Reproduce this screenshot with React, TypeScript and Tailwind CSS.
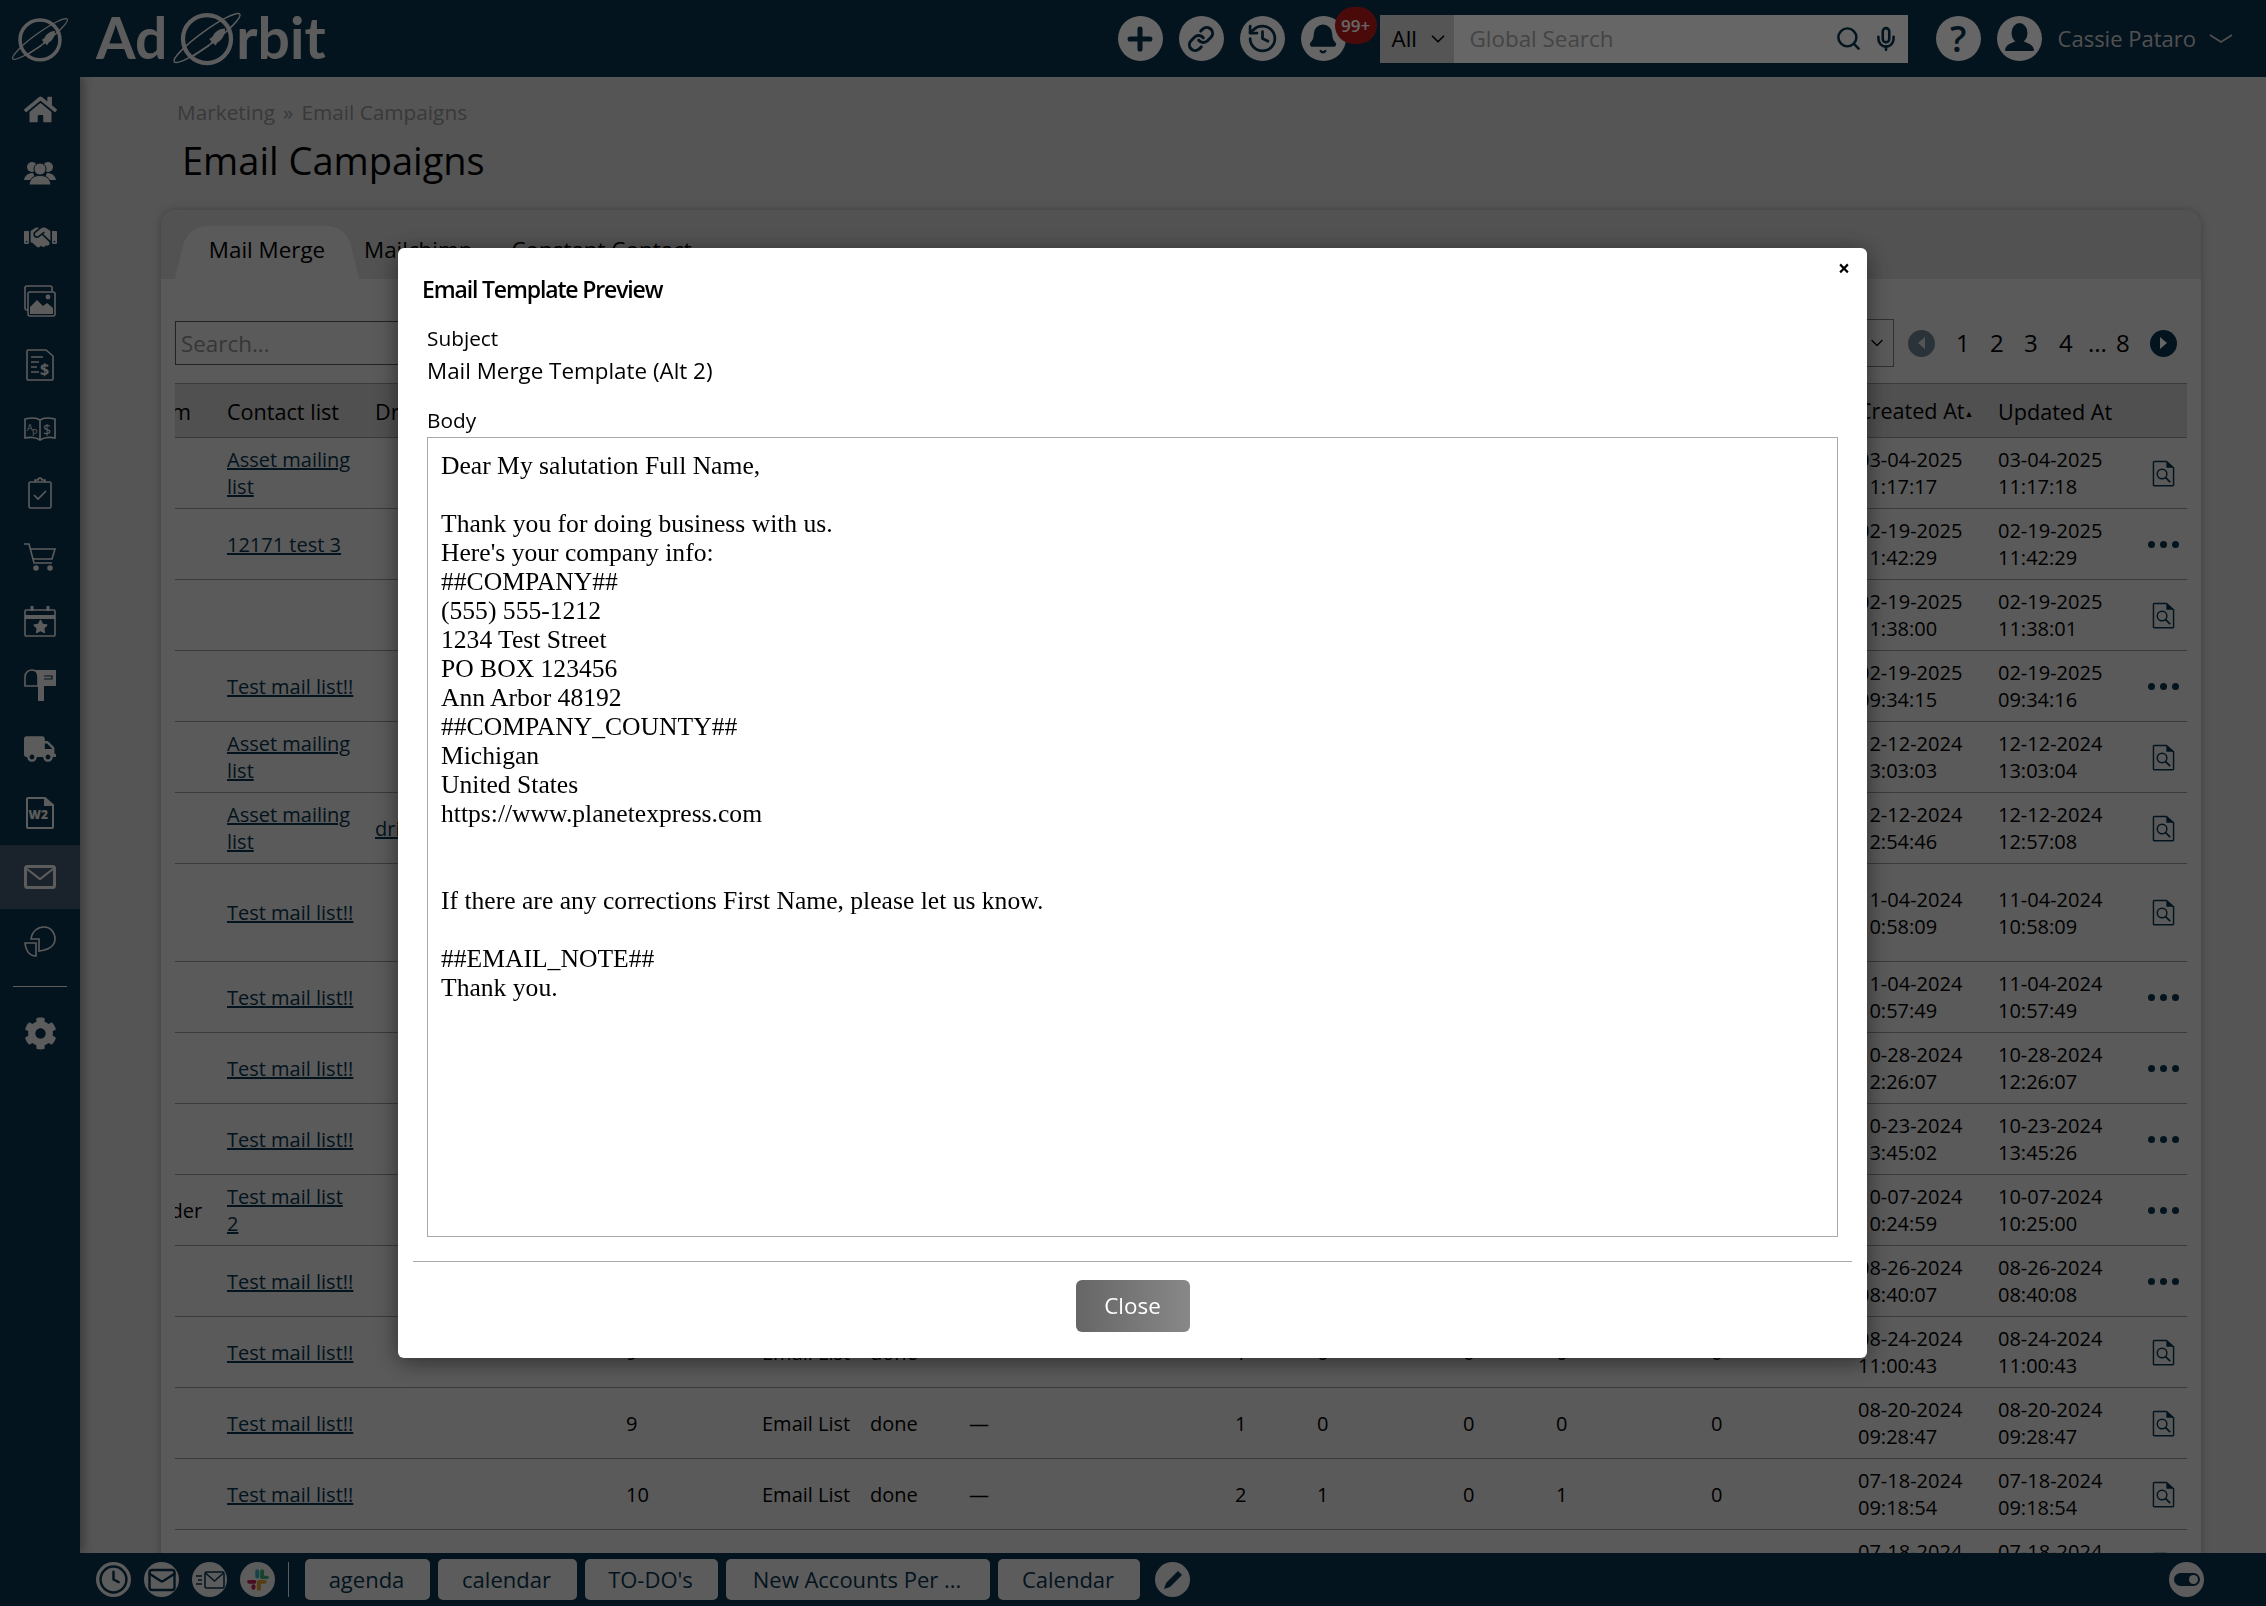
import React from "react";
import { Plus, Link, History, Bell, Search, Mic, ChevronDown, Clock, Mail } from "lucide-react";
import { FaHome, FaCog, FaTruck, FaStar } from "react-icons/fa";
import { FaHandshake } from "react-icons/fa6";

const sans = "font-['Open_Sans',sans-serif]";

type Row = {
  from?: string;
  list?: string;
  drip?: string;
  num?: string;
  type?: string;
  status?: string;
  a?: string;
  b?: string;
  c?: string;
  d?: string;
  e?: string;
  f?: string;
  created: string[];
  updated: string[];
  action: "doc" | "dots";
  tall?: boolean;
};

const rows: Row[] = [
  { list: "Asset mailing list", created: ["03-04-2025", "11:17:17"], updated: ["03-04-2025", "11:17:18"], action: "doc" },
  { list: "12171 test 3", created: ["02-19-2025", "11:42:29"], updated: ["02-19-2025", "11:42:29"], action: "dots" },
  { created: ["02-19-2025", "11:38:00"], updated: ["02-19-2025", "11:38:01"], action: "doc" },
  { list: "Test mail list!!", created: ["02-19-2025", "09:34:15"], updated: ["02-19-2025", "09:34:16"], action: "dots" },
  { list: "Asset mailing list", created: ["12-12-2024", "13:03:03"], updated: ["12-12-2024", "13:03:04"], action: "doc" },
  { list: "Asset mailing list", drip: "drip", created: ["12-12-2024", "12:54:46"], updated: ["12-12-2024", "12:57:08"], action: "doc" },
  { list: "Test mail list!!", created: ["11-04-2024", "10:58:09"], updated: ["11-04-2024", "10:58:09"], action: "doc", tall: true },
  { list: "Test mail list!!", created: ["11-04-2024", "10:57:49"], updated: ["11-04-2024", "10:57:49"], action: "dots" },
  { list: "Test mail list!!", created: ["10-28-2024", "12:26:07"], updated: ["10-28-2024", "12:26:07"], action: "dots" },
  { list: "Test mail list!!", created: ["10-23-2024", "13:45:02"], updated: ["10-23-2024", "13:45:26"], action: "dots" },
  { from: "Sender", list: "Test mail list 2", created: ["10-07-2024", "10:24:59"], updated: ["10-07-2024", "10:25:00"], action: "dots" },
  { list: "Test mail list!!", created: ["08-26-2024", "08:40:07"], updated: ["08-26-2024", "08:40:08"], action: "dots" },
  { list: "Test mail list!!", num: "9", type: "Email List", status: "done", a: "—", b: "1", c: "0", d: "0", e: "0", f: "0", created: ["08-24-2024", "11:00:43"], updated: ["08-24-2024", "11:00:43"], action: "doc" },
  { list: "Test mail list!!", num: "9", type: "Email List", status: "done", a: "—", b: "1", c: "0", d: "0", e: "0", f: "0", created: ["08-20-2024", "09:28:47"], updated: ["08-20-2024", "09:28:47"], action: "doc" },
  { list: "Test mail list!!", num: "10", type: "Email List", status: "done", a: "—", b: "2", c: "1", d: "0", e: "1", f: "0", created: ["07-18-2024", "09:18:54"], updated: ["07-18-2024", "09:18:54"], action: "doc" },
  { list: "Test mail list!!", num: "10", type: "Email List", status: "done", a: "—", b: "2", c: "1", d: "0", e: "1", f: "0", created: ["07-18-2024", "09:18:54"], updated: ["07-18-2024", "09:18:54"], action: "doc" },
];

const bodyLines = [
  "Dear My salutation Full Name,",
  "",
  "Thank you for doing business with us.",
  "Here's your company info:",
  "##COMPANY##",
  "(555) 555-1212",
  "1234 Test Street",
  "PO BOX 123456",
  "Ann Arbor 48192",
  "##COMPANY_COUNTY##",
  "Michigan",
  "United States",
  "https://www.planetexpress.com",
  "",
  "",
  "If there are any corrections First Name, please let us know.",
  "",
  "##EMAIL_NOTE##",
  "Thank you.",
];

function Logo({ className }: { className: string }) {
  return (
    <svg viewBox="0 0 70 60" className={className} fill="none" stroke="#e6e6e6">
      <circle cx="35" cy="31" r="22.5" strokeWidth="4" />
      <ellipse cx="35" cy="30" rx="38" ry="6.5" strokeWidth="1.4" transform="rotate(-36 35 30)" />
      <path d="M52 21 C47 21 42 24 40 29 L37 31 L39 33 L38 36 L41 35 L43 37 L45 34 C49 32 52 27 52 21Z" fill="#e6e6e6" stroke="none" />
      <path d="M37 37 L22 47" strokeWidth="1.4" />
    </svg>
  );
}

function DocSearch() {
  return (
    <svg viewBox="0 0 24 28" className="w-[23px] h-[27px] mx-auto" fill="none" stroke="#08324b" strokeWidth="1.5">
      <path d="M3 1.5 H15 L22.5 8 V26 a0.8 0.8 0 0 1 -0.8 0.8 H2.3 a0.8 0.8 0 0 1 -0.8 -0.8 V2.5 a1 1 0 0 1 1.5 -1Z" />
      <path d="M15 1 L23 8 H15Z" fill="#08324b" stroke="none" />
      <circle cx="10.5" cy="14.5" r="5" />
      <path d="M14.2 18.2 L19 23" strokeWidth="1.8" />
    </svg>
  );
}

function Dots() {
  return (
    <div className="flex items-center justify-center gap-[5px]">
      <span className="w-[7px] h-[7px] rounded-full bg-[#08324b]" />
      <span className="w-[7px] h-[7px] rounded-full bg-[#08324b]" />
      <span className="w-[7px] h-[7px] rounded-full bg-[#08324b]" />
    </div>
  );
}

function SideIcon({ children, active }: { children: React.ReactNode; active?: boolean }) {
  return <div className={`h-16 flex items-center justify-center text-[#e6e6e6] ${active ? "bg-[#41556e]" : ""}`}>{children}</div>;
}

function Sidebar() {
  const line = { fill: "none", stroke: "#e6e6e6", strokeWidth: 1.6 };
  return (
    <aside className="w-20 shrink-0 bg-[#08324b] z-10 shadow-[3px_0_10px_rgba(0,0,0,0.35)]">
      <SideIcon><FaHome size={33} /></SideIcon>
      <SideIcon>
        <svg viewBox="0 0 32 26" className="w-8 h-[26px]" fill="#e6e6e6">
          <circle cx="8" cy="7" r="5" /><circle cx="24" cy="7" r="5" />
          <path d="M0 20 C1 14 6 13 9 13 L12 20Z M32 20 C31 14 26 13 23 13 L20 20Z" />
          <circle cx="16" cy="9" r="6" stroke="#08324b" strokeWidth="1" />
          <path d="M5 25 C6 17 11 15.5 16 15.5 C21 15.5 26 17 27 25Z" stroke="#08324b" strokeWidth="1" />
        </svg>
      </SideIcon>
      <SideIcon><FaHandshake size={33} /></SideIcon>
      <SideIcon>
        <svg viewBox="0 0 32 32" className="w-8 h-8" {...line}>
          <rect x="1" y="1" width="27" height="24" rx="2" />
          <rect x="4" y="7" width="27" height="24" rx="2" fill="#08324b" />
          <path d="M6 29 V22 L13 15 L19 21 L23 18 L29 23 V29Z" fill="#e6e6e6" stroke="none" />
          <circle cx="24" cy="12" r="2.4" fill="#e6e6e6" stroke="none" />
        </svg>
      </SideIcon>
      <SideIcon>
        <svg viewBox="0 0 28 32" className="w-7 h-8" {...line}>
          <path d="M2 1 H20 L27 7 V30 a1 1 0 0 1 -1 1 H2 a1 1 0 0 1 -1 -1 V2 a1 1 0 0 1 1 -1Z" />
          <path d="M5 8 H17 M5 13 H13 M5 18 H11 M5 23 H13" />
          <text x="14" y="26" fontSize="16" fontWeight="700" fill="#e6e6e6" stroke="none" fontFamily="Open Sans">$</text>
        </svg>
      </SideIcon>
      <SideIcon>
        <svg viewBox="0 0 32 24" className="w-8 h-6" {...line}>
          <path d="M16 3 C12 0 5 1 1 2 V21 C5 20 12 20 16 23 C20 20 27 20 31 21 V2 C27 1 20 0 16 3Z M16 3 V23" />
          <text x="3" y="14" fontSize="9" fill="#e6e6e6" stroke="none" fontFamily="Open Sans">A</text>
          <text x="8" y="19" fontSize="9" fill="#e6e6e6" stroke="none" fontFamily="Open Sans">P</text>
          <text x="19" y="18" fontSize="14" fill="#e6e6e6" stroke="none" fontFamily="Open Sans">$</text>
        </svg>
      </SideIcon>
      <SideIcon>
        <svg viewBox="0 0 24 32" className="w-6 h-8" {...line}>
          <rect x="1" y="5" width="22" height="26" rx="1.5" />
          <path d="M7 5 V3 H10 C10 0.5 14 0.5 14 3 H17 V5" />
          <path d="M6 18 L10 22 L18 14" />
        </svg>
      </SideIcon>
      <SideIcon>
        <svg viewBox="0 0 32 28" className="w-8 h-7" {...line}>
          <path d="M0 1 H5 L10 20 H28" />
          <path d="M6 6 H31 L28 16 H9" />
          <circle cx="12" cy="25" r="2" fill="#e6e6e6" /><circle cx="26" cy="25" r="2" fill="#e6e6e6" />
        </svg>
      </SideIcon>
      <SideIcon>
        <div className="relative w-8 h-[31px] flex items-end">
          <svg viewBox="0 0 32 31" className="w-8 h-[31px]" {...line}>
            <rect x="1" y="4" width="30" height="26" rx="1" />
            <path d="M1 11 H31" strokeWidth="4" />
            <path d="M8 0 V5 M24 0 V5" strokeWidth="3" />
          </svg>
          <FaStar size={15} className="absolute left-[8.5px] bottom-[3px]" />
        </div>
      </SideIcon>
      <SideIcon>
        <svg viewBox="0 0 32 32" className="w-8 h-8" {...line}>
          <path d="M1 17 V8 C1 3 5 1 8 1 C12 1 14 4 14 8 V17Z" />
          <path d="M9 1 H32 V17 H20 V32 H14 V8 C14 5 12 2 9 1Z" fill="#e6e6e6" stroke="none" />
          <path d="M20 7 H28 V10 H20" stroke="#08324b" strokeWidth="1.2" />
        </svg>
      </SideIcon>
      <SideIcon><FaTruck size={32} /></SideIcon>
      <SideIcon>
        <svg viewBox="0 0 28 32" className="w-7 h-8" {...line} strokeWidth="2">
          <path d="M2 1 H19 L27 8 V30 a1 1 0 0 1 -1 1 H2 a1 1 0 0 1 -1 -1 V2 a1 1 0 0 1 1 -1Z" />
          <path d="M19 1 V8 H27" fill="#e6e6e6" />
          <text x="2.5" y="22" fontSize="12" fontWeight="800" fill="#e6e6e6" stroke="none" fontFamily="Open Sans">W2</text>
        </svg>
      </SideIcon>
      <SideIcon active>
        <svg viewBox="0 0 32 24" className="w-8 h-6" fill="none" stroke="#e6e6e6" strokeWidth="3">
          <rect x="1.5" y="1.5" width="29" height="21" rx="2" />
          <path d="M3 4 L16 14 L29 4" strokeWidth="2.2" />
        </svg>
      </SideIcon>
      <SideIcon>
        <svg viewBox="0 0 32 31" className="w-8 h-[31px]" {...line}>
          <path d="M7 13 C8 5 14 1 20 1 C27 1 31 7 31 13 C31 20 24 24 15 25 V13Z" />
          <path d="M1 17 H12 V30 C6 30 2 25 1 17Z" />
        </svg>
      </SideIcon>
      <div className="mx-[13px] mt-[13px] border-t border-[#e6e6e6]" />
      <div className="h-[14px]" />
      <SideIcon><FaCog size={33} /></SideIcon>
    </aside>
  );
}

function TopCircle({ children }: { children: React.ReactNode }) {
  return <div className="w-[45px] h-[45px] rounded-full bg-white flex items-center justify-center text-[#08324b]">{children}</div>;
}

function Header() {
  return (
    <header className={`h-[77px] shrink-0 bg-[#08324b] flex items-center z-20 ${sans}`}>
      <div className="w-20 flex justify-center"><Logo className="w-[62px] h-[54px]" /></div>
      <div className="pl-4 flex items-center text-[#e6e6e6] font-['Lato',sans-serif] font-bold text-[57px] leading-none -mt-[2px]">
        <span>Ad</span>
        <Logo className="w-[76px] h-[64px] ml-[2px]" />
        <span className="-ml-[9px]">rbit</span>
      </div>
      <div className="flex-1" />
      <div className="flex items-center gap-4">
        <TopCircle><Plus size={34} strokeWidth={3.6} /></TopCircle>
        <TopCircle><Link size={28} strokeWidth={2.6} /></TopCircle>
        <TopCircle><History size={33} strokeWidth={2} /></TopCircle>
        <div className="relative">
          <TopCircle><Bell size={32} fill="#08324b" strokeWidth={1.8} /></TopCircle>
          <span className="absolute -top-[9px] left-[34px] w-[42px] h-[37px] rounded-full bg-[#b91a1a] text-white text-[17px] font-semibold flex items-center justify-center">99+</span>
        </div>
      </div>
      <div className="ml-[34px] w-[528px] h-[48px] flex items-center bg-white">
        <div className="w-[74px] h-full bg-[#d4d4d4] flex items-center pl-[12px] gap-[10px] text-black text-[22.4px]">
          All
          <ChevronDown size={22} strokeWidth={1.8} />
        </div>
        <span className="pl-[16px] flex-1 text-[#aaaaaa] text-[22.4px]">Global Search</span>
        <Search size={27} strokeWidth={2.2} className="text-[#08324b]" />
        <Mic size={26} strokeWidth={2.4} className="ml-[11px] mr-[9px] text-[#08324b]" />
      </div>
      <div className="ml-[28px] flex items-center gap-[16px]">
        <TopCircle><span className="text-[36px] font-semibold leading-none">?</span></TopCircle>
        <TopCircle>
          <svg viewBox="0 0 45 45" className="w-[45px] h-[45px]" fill="#08324b">
            <ellipse cx="22.5" cy="17" rx="8" ry="10" />
            <path d="M8 34 C9 28 15 27 19 25 H26 C30 27 36 28 37 34 C37 35 36 35 34 35 H11 C9 35 8 35 8 34Z" />
          </svg>
        </TopCircle>
      </div>
      <span className="ml-[16px] text-[#c8c8c8] text-[22px]">Cassie Pataro</span>
      <svg viewBox="0 0 24 10" className="ml-[13px] mr-[33px] w-6 h-[10px]" fill="none" stroke="#c8c8c8" strokeWidth="1.6"><path d="M1 1 L12 8 L23 1" /></svg>
    </header>
  );
}

function FootCircle({ children }: { children: React.ReactNode }) {
  return <div className="w-[35px] h-[35px] rounded-full bg-[#e6e6e6] flex items-center justify-center text-[#08324b]">{children}</div>;
}

function FootTab({ label, w }: { label: string; w: string }) {
  return <div className={`${w} h-[41px] rounded-[5px] bg-[#e6e6e6] text-[#08324b] text-[22px] flex items-center justify-center whitespace-nowrap pr-[2px]`}>{label}</div>;
}

function Footer() {
  return (
    <footer className={`h-[53px] shrink-0 bg-[#08324b] flex items-center z-20 pl-[96px] ${sans}`}>
      <div className="flex items-center gap-[13px]">
        <FootCircle><Clock size={31} strokeWidth={1.9} /></FootCircle>
        <FootCircle><Mail size={30} strokeWidth={1.9} /></FootCircle>
        <FootCircle>
          <svg viewBox="0 0 30 20" className="w-[30px] h-5" fill="none" stroke="#08324b" strokeWidth="1.5">
            <rect x="10" y="2" width="19" height="16" rx="1.5" />
            <path d="M10.5 3 L19.5 11 L28.5 3" />
            <path d="M1 6 H7 M3 10 H7 M1 14 H7" />
          </svg>
        </FootCircle>
        <FootCircle>
          <svg viewBox="0 0 24 24" className="w-[26px] h-[26px]">
            <rect x="9.5" y="2" width="3.6" height="8.5" rx="1.8" fill="#36a7b5" />
            <rect x="14" y="2" width="3.6" height="8.5" rx="1.8" fill="#3aa672" />
            <rect x="14" y="8" width="8" height="3" rx="1.5" fill="#3aa672" />
            <rect x="2" y="12" width="8.5" height="3.4" rx="1.7" fill="#b8214f" />
            <rect x="11.5" y="12" width="8.5" height="3.4" rx="1.7" fill="#d29a28" />
            <rect x="11" y="13" width="3.6" height="9" rx="1.8" fill="#d29a28" />
            <rect x="6" y="16" width="3.6" height="5" rx="1.8" fill="#b8214f" />
          </svg>
        </FootCircle>
      </div>
      <div className="ml-[13px] w-px h-[35px] bg-[#e6e6e6]" />
      <div className="ml-[16px] flex items-center gap-[8px]">
        <FootTab label="agenda" w="w-[125px]" />
        <FootTab label="calendar" w="w-[139px]" />
        <FootTab label="TO-DO's" w="w-[133px]" />
        <FootTab label="New Accounts Per ..." w="w-[264px]" />
        <FootTab label="Calendar" w="w-[142px]" />
      </div>
      <div className="ml-[15px]">
        <FootCircle>
          <svg viewBox="0 0 24 24" className="w-6 h-6" fill="#08324b"><path d="M3 21 L5 15 L17 3 L21 7 L9 19Z" /></svg>
        </FootCircle>
      </div>
      <div className="flex-1" />
      <div className="mr-[62px]">
        <FootCircle>
          <div className="w-[26px] h-[13px] rounded-full bg-[#08324b] flex items-center justify-end pr-[2px]">
            <span className="w-[9px] h-[9px] rounded-full bg-[#e6e6e6]" />
          </div>
        </FootCircle>
      </div>
    </footer>
  );
}

function Table() {
  const th = "text-left font-normal p-0 pt-[2px] whitespace-nowrap text-[21.6px]";
  const link = "underline text-[#08324b]";
  return (
    <div className="overflow-hidden mt-[16px]">
      <table className="table-fixed w-[2012px] border-collapse text-[20px] leading-[27px] text-black">
        <colgroup>
          <col className="w-[52px]" /><col className="w-[148px]" /><col className="w-[251px]" />
          <col className="w-[136px]" /><col className="w-[108px]" /><col className="w-[99px]" />
          <col className="w-[266px]" /><col className="w-[82px]" /><col className="w-[146px]" />
          <col className="w-[93px]" /><col className="w-[155px]" /><col className="w-[147px]" />
          <col className="w-[140px]" /><col className="w-[142px]" /><col className="w-[47px]" />
        </colgroup>
        <thead>
          <tr className="h-[54px] bg-[#c8c8c8] border-t border-b border-[#919191]">
            <th className={th}><span className="block overflow-hidden"><span className="block -ml-[37px]">From</span></span></th>
            <th className={th}>Contact list</th>
            <th className={th}>Drip</th>
            <th className={th}>#</th>
            <th className={th}>Type</th>
            <th className={th}>Status</th>
            <th className={th}>Sent</th>
            <th className={th}>To</th>
            <th className={th}>Sent</th>
            <th className={th}>Open</th>
            <th className={th}>Click</th>
            <th className={th}>Bounce</th>
            <th className={th}>Created At<span className="text-[9px] align-middle">▲</span></th>
            <th className={th}>Updated At</th>
            <th className={th}></th>
          </tr>
        </thead>
        <tbody>
          {rows.map((r, i) => (
            <tr key={i} className={`${r.tall ? "h-[98px]" : "h-[71px]"} border-b border-[#919191]`}>
              <td className="p-0 whitespace-nowrap"><span className="block overflow-hidden"><span className="block -ml-[39px]">{r.from}</span></span></td>
              <td className="p-0 pr-[20px]"><span className={link}>{r.list}</span></td>
              <td className="p-0"><span className={link}>{r.drip}</span></td>
              <td className="p-0">{r.num}</td>
              <td className="p-0 whitespace-nowrap">{r.type}</td>
              <td className="p-0">{r.status}</td>
              <td className="p-0">{r.a}</td>
              <td className="p-0">{r.b}</td>
              <td className="p-0">{r.c}</td>
              <td className="p-0">{r.d}</td>
              <td className="p-0">{r.e}</td>
              <td className="p-0">{r.f}</td>
              <td className="p-0">{r.created[0]}<br />{r.created[1]}</td>
              <td className="p-0">{r.updated[0]}<br />{r.updated[1]}</td>
              <td className="p-0">{r.action === "doc" ? <DocSearch /> : <Dots />}</td>
            </tr>
          ))}
        </tbody>
      </table>
    </div>
  );
}

function Main() {
  return (
    <main className={`flex-1 min-w-0 bg-[#d4d4d4] overflow-hidden pl-[81px] pr-[65px] ${sans}`}>
      <div className="h-[133px] pl-[16px] pt-[21px]">
        <div className="text-[20.8px] leading-[28px] text-[#8f8f8f]">Marketing<span className="mx-[8px]">»</span>Email Campaigns</div>
        <h1 className="mt-[9px] pl-[5px] text-[38px] leading-[50px] text-black">Email Campaigns</h1>
      </div>
      <section className="bg-[#e1e1e1] rounded-t-[16px] shadow-[0_0_8px_rgba(0,0,0,0.25)] h-[1400px]">
        <div className="relative h-[69px] bg-[#cdcdcd] rounded-t-[16px] flex items-end pl-[14px] text-[22.4px] text-black">
          <div className="relative w-[184px] h-[53px] flex items-center justify-center pb-[5px]">
            <svg viewBox="0 0 184 53" className="absolute inset-0 w-[184px] h-[53px]" fill="#e1e1e1">
              <path d="M0 53 L8 20 Q13 0 34 0 H150 Q171 0 176 20 L184 53Z" />
            </svg>
            <span className="relative">Mail Merge</span>
          </div>
          <div className="h-[53px] flex items-center ml-[5px] pb-[5px]">Mailchimp</div>
          <div className="h-[53px] flex items-center ml-[39px] pb-[5px]">Constant Contact</div>
        </div>
        <div className="pt-[40px] px-[14px]">
          <div className="flex items-center h-[48px]">
            <div className="w-[500px] h-[44px] border border-[#555] flex items-center pl-[5px] pt-[2px] text-[22.4px] text-[#888]">Search...</div>
            <div className="flex-1" />
            <div className="w-[120px] h-[48px] border border-[#777] flex items-center justify-end pr-[6px]">
              <ChevronDown size={20} strokeWidth={1.6} />
            </div>
            <div className="ml-[14px] w-[27px] h-[27px] rounded-full bg-[#6a7f8e] flex items-center justify-center">
              <span className="w-0 h-0 border-y-[6px] border-y-transparent border-r-[7px] border-r-[#d4d4d4]" />
            </div>
            <div className="ml-[21px] flex items-center text-[24px] text-black leading-none">
              <span className="w-[34px]">1</span>
              <span className="w-[34px]">2</span>
              <span className="w-[35px]">3</span>
              <span className="w-[29px]">4</span>
              <span className="w-[28px]">...</span>
              <span className="w-[33px]">8</span>
            </div>
            <div className="ml-[1px] w-[27px] h-[27px] rounded-full bg-[#08324b] flex items-center justify-center">
              <span className="w-0 h-0 border-y-[6px] border-y-transparent border-l-[7px] border-l-white" />
            </div>
            <div className="w-[10px]" />
          </div>
          <Table />
        </div>
      </section>
    </main>
  );
}

function Modal() {
  return (
    <div className={`fixed left-[398px] top-[248px] z-50 w-[1469px] h-[1110px] bg-white rounded-[6px] shadow-[0_4px_24px_rgba(0,0,0,0.5)] text-black ${sans}`}>
      <button className="absolute right-[17px] top-[10px] text-[21px] font-bold leading-none text-black">×</button>
      <div className="pt-[25px] pl-[24px] text-[23px] leading-[32px] font-semibold tracking-[-1.15px]">Email Template Preview</div>
      <div className="pl-[29px] pr-[29px]">
        <div className="mt-[17px] text-[20.8px] leading-[32px]">Subject</div>
        <div className="mt-[1px] text-[22.4px] leading-[32px]">Mail Merge Template (Alt 2)</div>
        <div className="mt-[17px] pb-[1px] text-[20.8px] leading-[32px]">Body</div>
        <div className="h-[800px] border border-[#aaaaaa] pt-[13px] pl-[13px] font-['Liberation_Serif',serif] text-[25.6px] leading-[29px] whitespace-pre-line">
          {bodyLines.join("\n")}
        </div>
      </div>
      <div className="mx-[15px] mt-[24px] border-t border-[#aaaaaa]" />
      <div className="mt-[18px] flex justify-center">
        <button className="w-[114px] h-[52px] rounded-[6px] pb-[1px] bg-gradient-to-r from-[#666666] to-[#888888] text-white text-[22.4px]">Close</button>
      </div>
    </div>
  );
}

export default function App() {
  return (
    <div className="relative h-screen w-full overflow-hidden flex flex-col">
      <Header />
      <div className="flex-1 min-h-0 flex">
        <Sidebar />
        <Main />
      </div>
      <Footer />
      <div className="fixed inset-0 z-40 bg-black/60" />
      <Modal />
    </div>
  );
}
